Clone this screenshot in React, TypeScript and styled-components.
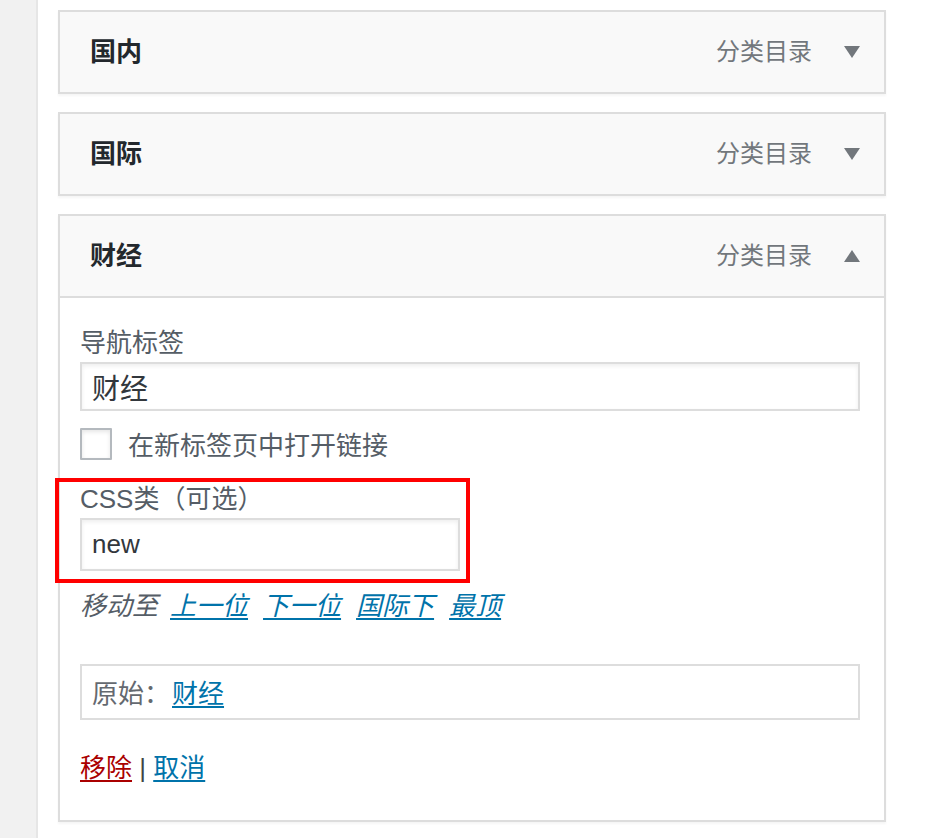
import React from 'react'
import styled, { createGlobalStyle } from 'styled-components'

const GlobalStyle = createGlobalStyle`
  html, body {
    margin: 0;
    padding: 0;
    background: #fff;
  }
  body {
    font-family: "Liberation Sans", "Noto Sans CJK SC", sans-serif;
    color: #444;
  }
`

const Page = styled.div`
  display: flex;
  min-height: 838px;
`

const Sidebar = styled.div`
  width: 36px;
  flex-shrink: 0;
  background: #f1f1f1;
  border-right: 2px solid #e6e6e6;
`

const MenuList = styled.div`
  display: flex;
  flex-direction: column;
  gap: 18px;
  width: 828px;
  padding: 10px 0 0 20px;
`

const MenuItem = styled.div`
  display: flex;
  flex-direction: column;
  box-shadow: 0 2px 2px rgba(0, 0, 0, 0.04);
`

const Handle = styled.div`
  display: flex;
  align-items: center;
  height: 84px;
  box-sizing: border-box;
  padding: 0 24px 0 30px;
  background: #f9f9f9;
  border: 2px solid #dddddd;
`

/* CJK glyphs sit low in the line box, lift them a little */
const ItemTitle = styled.span`
  flex: 1;
  margin-bottom: 5px;
  font-size: 26px;
  font-weight: 600;
  color: #23282d;
`

const ItemType = styled.span`
  margin: 0 32px 5px 0;
  font-size: 24px;
  color: #72777c;
`

const Toggle = styled.svg`
  width: 16px;
  height: 12px;
  fill: #72777c;
`

const Settings = styled.div`
  display: flex;
  flex-direction: column;
  box-sizing: border-box;
  padding: 28px 24px 34px 20px;
  border: 2px solid #dddddd;
  border-top: none;
  background: #fff;
`

const Field = styled.div<{ $mt?: number }>`
  position: relative;
  display: flex;
  flex-direction: column;
  gap: 2px;
  margin-top: ${({ $mt }) => $mt || 0}px;
`

const Label = styled.label`
  font-size: 26px;
  line-height: 34px;
  color: #555d66;
`

const TextInput = styled.input<{ $h: number; $w?: number; $fs?: number }>`
  box-sizing: border-box;
  width: ${({ $w }) => ($w ? `${$w}px` : '100%')};
  height: ${({ $h }) => $h}px;
  padding: 0 10px;
  border: 2px solid #dddddd;
  box-shadow: inset 0 2px 4px rgba(0, 0, 0, 0.07);
  background: #fff;
  font-family: "Liberation Sans", "Noto Sans CJK SC", sans-serif;
  font-size: ${({ $fs }) => $fs || 28}px;
  color: #32373c;
  outline: none;
`

const CheckRow = styled.label`
  display: flex;
  align-items: center;
  gap: 16px;
  margin-top: 14px;
  font-size: 26px;
  color: #555d66;
`

const Checkbox = styled.input`
  appearance: none;
  margin: 0;
  width: 32px;
  height: 32px;
  border: 2px solid #b4b9be;
  border-radius: 1px;
  background: #fff;
  box-shadow: inset 0 2px 4px rgba(0, 0, 0, 0.1);
`

const Highlight = styled.div`
  position: absolute;
  left: -25px;
  top: -4px;
  width: 415px;
  height: 105px;
  box-sizing: border-box;
  border: 4px solid #ff0000;
  pointer-events: none;
`

const MoveRow = styled.div`
  display: flex;
  gap: 15px;
  margin-top: 17px;
  font-size: 26px;
  line-height: 36px;
  font-style: italic;
  color: #555d66;
`

const MoveLabel = styled.span`
  margin-right: -3px;
`

const Link = styled.a<{ $danger?: boolean }>`
  color: ${({ $danger }) => ($danger ? '#a00' : '#0073aa')};
  text-decoration: underline;
  text-underline-offset: 3px;
  cursor: pointer;
`

const Original = styled.div`
  display: flex;
  align-items: center;
  gap: 2px;
  box-sizing: border-box;
  height: 56px;
  margin-top: 40px;
  padding: 0 10px 2px;
  border: 2px solid #dddddd;
  font-size: 26px;
  color: #646970;
`

const Actions = styled.div`
  margin-top: 30px;
  font-size: 26px;
  line-height: 36px;
  color: #444;
`

const Arrow = ({ up }: { up?: boolean }) => (
  <Toggle viewBox="0 0 16 12">
    {up ? <polygon points="8,0 16,12 0,12" /> : <polygon points="0,0 16,0 8,12" />}
  </Toggle>
)

const ClosedItem = ({ title }: { title: string }) => (
  <MenuItem>
    <Handle>
      <ItemTitle>{title}</ItemTitle>
      <ItemType>分类目录</ItemType>
      <Arrow />
    </Handle>
  </MenuItem>
)

export default function App() {
  return (
    <Page>
      <GlobalStyle />
      <Sidebar />
      <MenuList>
        <ClosedItem title="国内" />
        <ClosedItem title="国际" />
        <MenuItem>
          <Handle>
            <ItemTitle>财经</ItemTitle>
            <ItemType>分类目录</ItemType>
            <Arrow up />
          </Handle>
          <Settings>
            <Field>
              <Label>导航标签</Label>
              <TextInput $h={49} defaultValue="财经" />
            </Field>
            <CheckRow>
              <Checkbox type="checkbox" />
              在新标签页中打开链接
            </CheckRow>
            <Field $mt={20}>
              <Label>CSS类（可选）</Label>
              <TextInput $h={53} $w={380} $fs={26} defaultValue="new" />
              <Highlight />
            </Field>
            <MoveRow>
              <MoveLabel>移动至</MoveLabel>
              <Link>上一位</Link>
              <Link>下一位</Link>
              <Link>国际下</Link>
              <Link>最顶</Link>
            </MoveRow>
            <Original>
              原始：<Link>财经</Link>
            </Original>
            <Actions>
              <Link $danger>移除</Link> | <Link>取消</Link>
            </Actions>
          </Settings>
        </MenuItem>
      </MenuList>
    </Page>
  )
}
